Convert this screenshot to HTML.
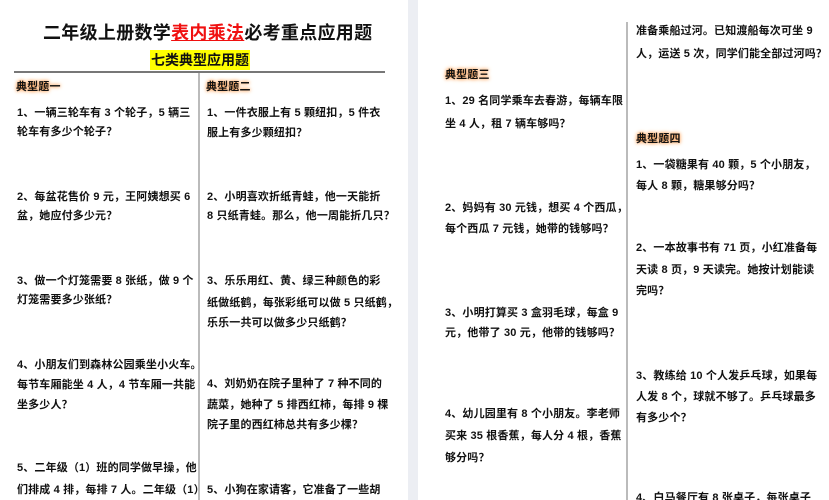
<!DOCTYPE html>
<html><head><meta charset="utf-8"><style>
html,body{margin:0;padding:0;width:829px;height:500px;overflow:hidden;background:#fff;}
body{position:relative;font-family:"Liberation Sans","Noto Sans CJK SC",sans-serif;color:#111;}
.t{position:absolute;font-size:11px;line-height:16px;white-space:nowrap;letter-spacing:0.15px;font-weight:bold;}
.h{text-shadow:0 0 3px #ffa050,0 0 5px #ffb070;}
#gap{position:absolute;left:408px;top:0;width:10px;height:500px;background:#eceef3;}
.v{position:absolute;width:2px;background:#bbb;}
</style></head><body>
<div id="gap"></div>
<div class="t" style="left:43px;top:21px;font-size:18px;line-height:24px;letter-spacing:0.3px;font-weight:bold;">二年级上册数学<span style="color:#f01010;text-decoration:underline;">表内乘法</span>必考重点应用题</div>
<div class="t" style="left:150px;top:50px;font-size:14px;line-height:20px;background:#ffff00;padding:0 1px;letter-spacing:0;">七类典型应用题</div>
<div style="position:absolute;left:14px;top:71px;width:371px;height:2px;background:#777;"></div>
<div class="v" style="left:198px;top:73px;height:427px;"></div>
<div class="v" style="left:626px;top:22px;height:478px;"></div>

<div class="t h" style="left:16px;top:79px;">典型题一</div>
<div class="t" style="left:17px;top:105px;">1、一辆三轮车有 3 个轮子，5 辆三</div>
<div class="t" style="left:17px;top:124px;">轮车有多少个轮子？</div>
<div class="t" style="left:17px;top:189px;">2、每盆花售价 9 元，王阿姨想买 6</div>
<div class="t" style="left:17px;top:208px;">盆，她应付多少元？</div>
<div class="t" style="left:17px;top:273px;">3、做一个灯笼需要 8 张纸，做 9 个</div>
<div class="t" style="left:17px;top:292px;">灯笼需要多少张纸？</div>
<div class="t" style="left:17px;top:357px;">4、小朋友们到森林公园乘坐小火车。</div>
<div class="t" style="left:17px;top:377px;">每节车厢能坐 4 人，4 节车厢一共能</div>
<div class="t" style="left:17px;top:397px;">坐多少人？</div>
<div class="t" style="left:17px;top:460px;">5、二年级（1）班的同学做早操，他</div>
<div class="t" style="left:17px;top:482px;">们排成 4 排，每排 7 人。二年级（1）</div>

<div class="t h" style="left:206px;top:79px;">典型题二</div>
<div class="t" style="left:207px;top:105px;">1、一件衣服上有 5 颗纽扣，5 件衣</div>
<div class="t" style="left:207px;top:125px;">服上有多少颗纽扣？</div>
<div class="t" style="left:207px;top:189px;">2、小明喜欢折纸青蛙，他一天能折</div>
<div class="t" style="left:207px;top:208px;">8 只纸青蛙。那么，他一周能折几只？</div>
<div class="t" style="left:207px;top:273px;">3、乐乐用红、黄、绿三种颜色的彩</div>
<div class="t" style="left:207px;top:295px;">纸做纸鹤，每张彩纸可以做 5 只纸鹤，</div>
<div class="t" style="left:207px;top:315px;">乐乐一共可以做多少只纸鹤？</div>
<div class="t" style="left:207px;top:376px;">4、刘奶奶在院子里种了 7 种不同的</div>
<div class="t" style="left:207px;top:397px;">蔬菜，她种了 5 排西红柿，每排 9 棵</div>
<div class="t" style="left:207px;top:417px;">院子里的西红柿总共有多少棵？</div>
<div class="t" style="left:207px;top:482px;">5、小狗在家请客，它准备了一些胡</div>

<div class="t h" style="left:445px;top:67px;">典型题三</div>
<div class="t" style="left:445px;top:93px;">1、29 名同学乘车去春游，每辆车限</div>
<div class="t" style="left:445px;top:116px;">坐 4 人，租 7 辆车够吗？</div>
<div class="t" style="left:445px;top:200px;">2、妈妈有 30 元钱，想买 4 个西瓜，</div>
<div class="t" style="left:445px;top:221px;">每个西瓜 7 元钱，她带的钱够吗？</div>
<div class="t" style="left:445px;top:305px;">3、小明打算买 3 盒羽毛球，每盒 9</div>
<div class="t" style="left:445px;top:325px;">元，他带了 30 元，他带的钱够吗？</div>
<div class="t" style="left:445px;top:406px;">4、幼儿园里有 8 个小朋友。李老师</div>
<div class="t" style="left:445px;top:428px;">买来 35 根香蕉，每人分 4 根，香蕉</div>
<div class="t" style="left:445px;top:450px;">够分吗？</div>

<div class="t" style="left:636px;top:23px;">准备乘船过河。已知渡船每次可坐 9</div>
<div class="t" style="left:636px;top:46px;">人，运送 5 次，同学们能全部过河吗？</div>
<div class="t h" style="left:636px;top:131px;">典型题四</div>
<div class="t" style="left:636px;top:157px;">1、一袋糖果有 40 颗，5 个小朋友，</div>
<div class="t" style="left:636px;top:178px;">每人 8 颗，糖果够分吗？</div>
<div class="t" style="left:636px;top:240px;">2、一本故事书有 71 页，小红准备每</div>
<div class="t" style="left:636px;top:262px;">天读 8 页，9 天读完。她按计划能读</div>
<div class="t" style="left:636px;top:283px;">完吗？</div>
<div class="t" style="left:636px;top:368px;">3、教练给 10 个人发乒乓球，如果每</div>
<div class="t" style="left:636px;top:389px;">人发 8 个，球就不够了。乒乓球最多</div>
<div class="t" style="left:636px;top:410px;">有多少个？</div>
<div class="t" style="left:636px;top:490px;">4、白马餐厅有 8 张桌子，每张桌子</div>
</body></html>
